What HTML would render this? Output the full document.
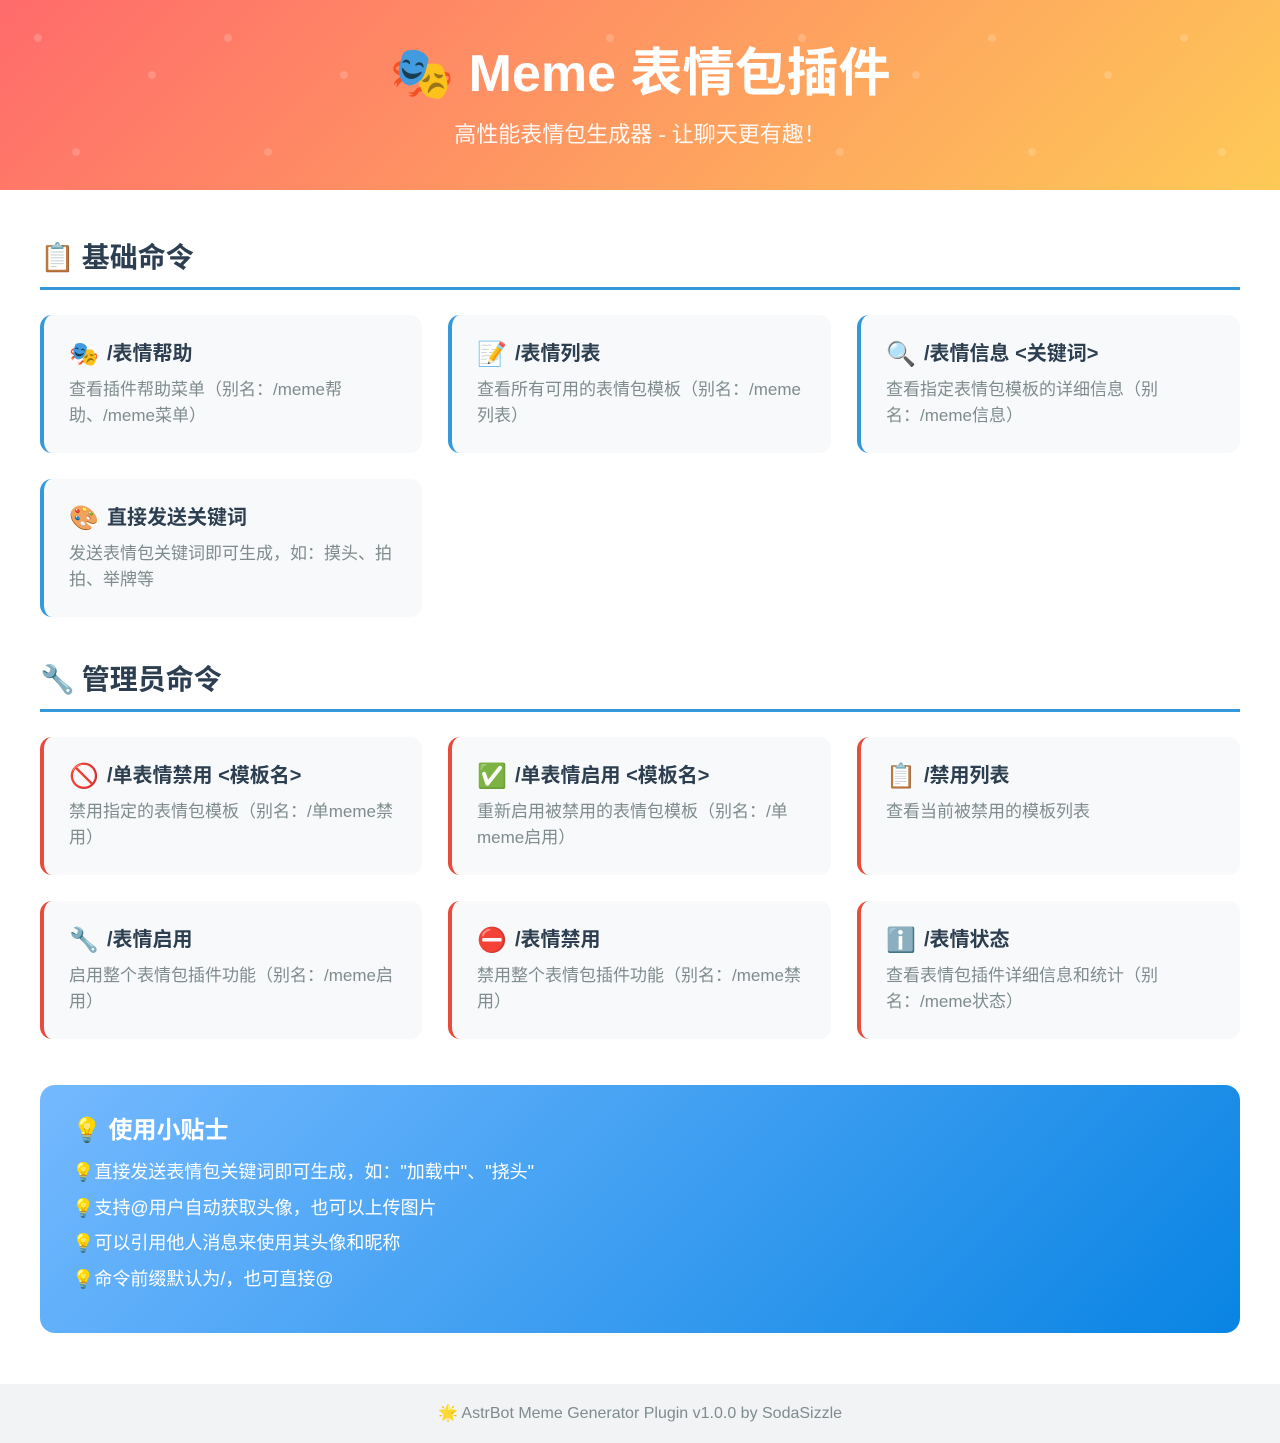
<!DOCTYPE html>
<html><head><meta charset="utf-8"><style>
*{margin:0;padding:0;box-sizing:border-box}
body{width:1280px;height:1443px;background:#fff;font-family:"Liberation Sans","Noto Sans CJK SC",sans-serif;color:#2c3e50;overflow:hidden;position:relative}
.hdr{height:190px;background:linear-gradient(135deg,#ff6b6b,#feca57);text-align:center;color:#fff;position:relative;overflow:hidden}
.hdr h1{font-size:52px;font-weight:bold;position:absolute;top:42px;left:0;right:0;line-height:64px}
.hdr p{font-size:22px;position:absolute;top:119px;left:0;right:0;line-height:32px;opacity:.92}
.dot{position:absolute;width:8px;height:8px;border-radius:50%;background:rgba(255,255,255,.18)}
.main{padding:0 40px}
h2{font-size:28px;font-weight:bold;line-height:40px;padding-bottom:9px;border-bottom:3px solid #3498db;margin-top:48px}
h2.s2{margin-top:43px}
.e{display:inline-block;width:38px;font-size:24px;vertical-align:-2px;line-height:28px}
.e2{display:inline-block;width:34px}
.grid{display:grid;grid-template-columns:382px 383px 383px;column-gap:26px;row-gap:26px;margin-top:25px}
.card{height:138px;background:#f8f9fa;border-radius:12px;border-left:4px solid #3498db;padding:24px 25px}
.red .card{border-left-color:#e74c3c}
.card h3{font-size:20px;font-weight:bold;line-height:30px;margin-bottom:8px}
.card p{font-size:17px;color:#7f8c8d;line-height:26px}
.tips{margin-top:46px;height:248px;border-radius:15px;background:linear-gradient(135deg,#74b9ff,#0984e3);color:#fff;padding:28px 32px}
.tips h3{font-size:24px;font-weight:bold;line-height:36px;margin-bottom:6px}
.tips div{font-size:18px;line-height:35.5px}
.ftr{position:absolute;top:1384px;left:0;width:1280px;height:59px;background:#f1f3f5;text-align:center;font-size:16px;line-height:59px;color:#7f8c8d}
</style></head><body>
<div class="hdr">
<span class="dot" style="left:34px;top:34px"></span><span class="dot" style="left:148px;top:71px"></span><span class="dot" style="left:224px;top:34px"></span><span class="dot" style="left:340px;top:71px"></span><span class="dot" style="left:72px;top:148px"></span><span class="dot" style="left:264px;top:148px"></span><span class="dot" style="left:606px;top:34px"></span><span class="dot" style="left:798px;top:34px"></span><span class="dot" style="left:912px;top:71px"></span><span class="dot" style="left:988px;top:34px"></span><span class="dot" style="left:1104px;top:71px"></span><span class="dot" style="left:1180px;top:34px"></span><span class="dot" style="left:836px;top:148px"></span><span class="dot" style="left:1028px;top:148px"></span><span class="dot" style="left:1218px;top:148px"></span>
<h1>🎭 Meme 表情包插件</h1>
<p>高性能表情包生成器 - 让聊天更有趣！</p>
</div>
<div class="main">
<h2><span class="e2">📋</span> 基础命令</h2>
<div class="grid">
<div class="card"><h3><span class="e">🎭</span>/表情帮助</h3><p>查看插件帮助菜单（别名：/meme帮助、/meme菜单）</p></div>
<div class="card"><h3><span class="e">📝</span>/表情列表</h3><p>查看所有可用的表情包模板（别名：/meme列表）</p></div>
<div class="card"><h3><span class="e">🔍</span>/表情信息 &lt;关键词&gt;</h3><p>查看指定表情包模板的详细信息（别名：/meme信息）</p></div>
<div class="card"><h3><span class="e">🎨</span>直接发送关键词</h3><p>发送表情包关键词即可生成，如：摸头、拍拍、举牌等</p></div>
</div>
<h2 class="s2"><span class="e2">🔧</span> 管理员命令</h2>
<div class="grid red">
<div class="card"><h3><span class="e">🚫</span>/单表情禁用 &lt;模板名&gt;</h3><p>禁用指定的表情包模板（别名：/单meme禁用）</p></div>
<div class="card"><h3><span class="e">✅</span>/单表情启用 &lt;模板名&gt;</h3><p>重新启用被禁用的表情包模板（别名：/单meme启用）</p></div>
<div class="card"><h3><span class="e">📋</span>/禁用列表</h3><p>查看当前被禁用的模板列表</p></div>
<div class="card"><h3><span class="e">🔧</span>/表情启用</h3><p>启用整个表情包插件功能（别名：/meme启用）</p></div>
<div class="card"><h3><span class="e">⛔</span>/表情禁用</h3><p>禁用整个表情包插件功能（别名：/meme禁用）</p></div>
<div class="card"><h3><span class="e">ℹ️</span>/表情状态</h3><p>查看表情包插件详细信息和统计（别名：/meme状态）</p></div>
</div>
<div class="tips">
<h3>💡 使用小贴士</h3>
<div>💡直接发送表情包关键词即可生成，如："加载中"、"挠头"</div>
<div>💡支持@用户自动获取头像，也可以上传图片</div>
<div>💡可以引用他人消息来使用其头像和昵称</div>
<div>💡命令前缀默认为/，也可直接@</div>
</div>
</div>
<div class="ftr">🌟 AstrBot Meme Generator Plugin v1.0.0 by SodaSizzle</div>
</body></html>
